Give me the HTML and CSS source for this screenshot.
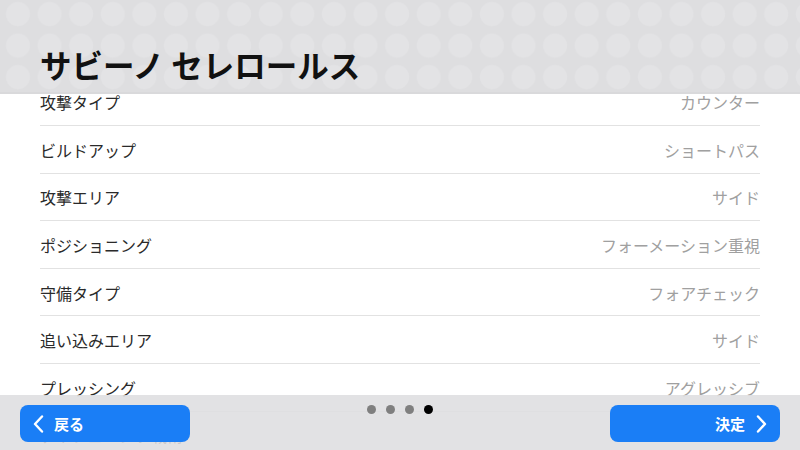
FILE: index.html
```html
<!DOCTYPE html>
<html lang="ja">
<head>
<meta charset="utf-8">
<title>サビーノ セレロールス</title>
<link rel="stylesheet" href="styles.css">
</head>
<body>
<div class="screen">
  <ul class="list">
    <li class="row"><span class="label">攻撃タイプ</span><span class="value">カウンター</span></li>
    <li class="row"><span class="label">ビルドアップ</span><span class="value">ショートパス</span></li>
    <li class="row"><span class="label">攻撃エリア</span><span class="value">サイド</span></li>
    <li class="row"><span class="label">ポジショニング</span><span class="value">フォーメーション重視</span></li>
    <li class="row"><span class="label">守備タイプ</span><span class="value">フォアチェック</span></li>
    <li class="row"><span class="label">追い込みエリア</span><span class="value">サイド</span></li>
    <li class="row"><span class="label">プレッシング</span><span class="value">アグレッシブ</span></li>
    <li class="row"><span class="label">ディフェンシブ戦術</span><span class="value">&nbsp;</span></li>
  </ul>
  <header class="top">
    <h1 class="title">サビーノ セレロールス</h1>
  </header>
  <footer class="bottom">
    <button class="btn btn-back">
      <svg class="chev" width="11" height="18" viewBox="0 0 11 18"><path d="M9 1.5 L2 9 L9 16.5" fill="none" stroke="#fff" stroke-width="2.4" stroke-linecap="round" stroke-linejoin="round"/></svg>
      <span>戻る</span>
    </button>
    <div class="dots">
      <span class="dot"></span><span class="dot"></span><span class="dot"></span><span class="dot active"></span>
    </div>
    <button class="btn btn-ok">
      <span>決定</span>
      <svg class="chev" width="11" height="18" viewBox="0 0 11 18"><path d="M2 1.5 L9 9 L2 16.5" fill="none" stroke="#fff" stroke-width="2.4" stroke-linecap="round" stroke-linejoin="round"/></svg>
    </button>
  </footer>
</div>
</body>
</html>
```

FILE: styles.css
```css
* { box-sizing: border-box; }
html, body { margin: 0; padding: 0; }
body {
  width: 800px;
  height: 450px;
  overflow: hidden;
  background: #fff;
  font-family: "Noto Sans CJK JP", "Noto Sans", sans-serif;
}
.screen {
  position: relative;
  width: 800px;
  height: 450px;
  overflow: hidden;
  background: #fff;
}
.top {
  position: absolute;
  top: 0;
  left: 0;
  width: 800px;
  height: 94px;
  display: flex;
  flex-direction: column;
  justify-content: flex-end;
  padding: 0 0 12px 40px;
  background-color: #dedee0;
  background-image: radial-gradient(circle at center, #e3e3e5 0, #e3e3e5 11.5px, rgba(227,227,229,0) 12.5px);
  background-size: 31.6px 31.5px;
  background-position: 2.2px -1.7px;
  border-bottom: 2px solid #d9d9db;
}
.title {
  margin: 0;
  font-size: 31.5px;
  line-height: 32px;
  font-weight: 700;
  color: #111;
  letter-spacing: 0;
}
.list {
  list-style: none;
  margin: 0;
  padding: 78.4px 40px 0 40px;
}
.row {
  height: 47.6px;
  display: flex;
  align-items: center;
  justify-content: space-between;
  border-bottom: 1px solid #e2e2e2;
  font-size: 16px;
  padding-top: 1px;
}
.label { color: #2a2a2a; }
.value { color: #a0a0a0; }
.bottom {
  position: absolute;
  left: 0;
  bottom: 0;
  width: 800px;
  height: 55px;
  display: flex;
  align-items: flex-start;
  justify-content: space-between;
  padding: 10px 20px 0 20px;
  background: rgba(222, 222, 224, 0.88);
}
.btn {
  width: 170px;
  height: 37px;
  border: none;
  border-radius: 8px;
  background: #1a7ef6;
  color: #fff;
  font-family: "Noto Sans CJK JP", sans-serif;
  font-size: 15px;
  font-weight: 700;
  display: flex;
  align-items: center;
  padding: 0 13px;
  gap: 10px;
}
.btn-back { justify-content: flex-start; }
.btn-ok { justify-content: flex-end; gap: 11px; }
.chev { display: block; flex: none; }
.dots {
  display: flex;
  gap: 10px;
}
.dot {
  width: 9px;
  height: 9px;
  border-radius: 50%;
  background: #7f7f7f;
}
.dot.active { background: #000; }
```
